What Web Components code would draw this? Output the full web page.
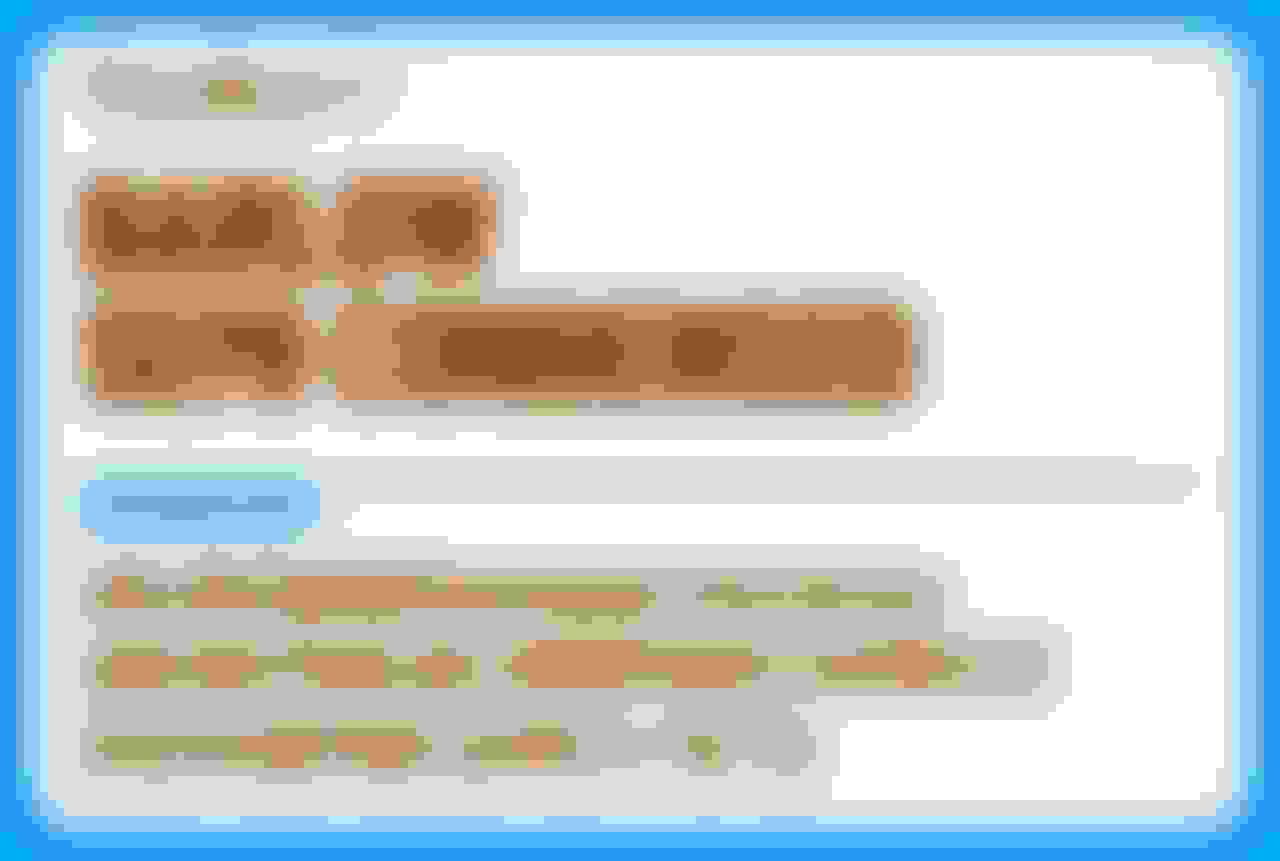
<!DOCTYPE html>
<html lang="en">
<head>
<meta charset="utf-8">
<meta name="viewport" content="width=device-width, initial-scale=1">
<title>Mosaic card</title>
<style>
html,body{margin:0;background:#2697f2;font-family:"Liberation Sans",sans-serif}
</style>
</head>
<body>
<mosaic-card>
  <mosaic-art slot="corner" class="tl" art="topLeft"></mosaic-art>
  <mosaic-art slot="corner" class="tr" art="topRight"></mosaic-art>
  <mosaic-art slot="corner" class="bl" art="bottomLeft"></mosaic-art>
  <mosaic-art slot="corner" class="br" art="bottomRight"></mosaic-art>
  <mosaic-art art="label"></mosaic-art>
  <mosaic-art art="heading"></mosaic-art>
  <mosaic-art art="tag"></mosaic-art>
  <mosaic-art art="summary"></mosaic-art>
</mosaic-card>
<script>
const CELL = 8;
const COLORS = {
  deep:'#00aef3', blue:'#2697f2', sky:'#47b7ff', steel:'#74aad8', light:'#94caf8', ice:'#b2ebff',
  teal:'#46c2d8', aqua:'#66e2f8', mint:'#b2f5df', sage:'#94d6c0', white:'#ffffff',
  g1:'#dfdfdf', g2:'#bfbfbf', g3:'#9f9f9f', lime:'#bfca87', olive:'#9faa68',
  tan:'#cc9367', peach:'#edb387', brown:'#ac7348', dark:'#8c5327'
};

// Each drawing: box = [x, y, columns, rows]; columns 0 means "fill the row".
// A layer is a colour and its runs, written row:from-to or row-row:from-to (ends excluded).
const ART = {
  topLeft: { box:[0,0,60,11], layers:[
    ['blue','2:0-8 3:0-6 4:0-4 5-7:0-3 7-11:0-2'],
    ['deep','0-2:0-4 2-4:0-2'],
    ['sky','2:8-10 3:6-10 4:4-6 5:3-6 6:3-4 7-10:2-4'],
    ['teal','2-4:10-12'],
    ['steel','3:12-17,25-32,41-47 4:6-7 6:4-5 10:2-4'],
    ['light','4:7-12 5:6-16,26-31 6:5-6 7-9:4-6 9:4-5'],
    ['mint','6-8:6-8'], ['sage','6:6-7']
  ]},
  topRight: { box:[140,0,20,12], layers:[
    ['blue','2:152-160 3:154-160 4:156-160 5-7:157-160 7-11:158-160'],
    ['deep','0-2:156-160'],
    ['g1','7:144-154 8:151-154 9-12:152-154'],
    ['sky','2:150-152 3:150-154 4:154-156 5:154-157 6:156-157 7-10:156-158'],
    ['teal','2-4:148-150'],
    ['light','4:148-153 5:151-154 6:154-155 7-9:154-156 9:155-156'],
    ['steel','4:153-154 6:155-156 10:156-158'],
    ['mint','6-8:152-154'], ['sage','6:153-154']
  ]},
  bottomLeft: { box:[0,96,110,12], layers:[
    ['blue','98-100:0-2 100-102:0-3 102:0-4 103:0-5 104:0-6 105:0-9 106-108:0-10'],
    ['deep','104-106:0-2 106-108:0-4'],
    ['light','99:5-6 100-102:5-8 102:6-25,30-41,45-63,68-75,87-90,95-102'],
    ['sky','98-100:2-4 100-102:3-4 102:4-6 103:5-6'],
    ['steel','100-102:4-5 103:6-8'],
    ['ice','100:7-8'], ['teal','96-98:2-4'], ['aqua','96:3-4']
  ]},
  bottomRight: { box:[140,96,20,12], layers:[
    ['g1','96-99:152-154 99:150-154'],
    ['blue','100-102:157-160 102:156-160 103:155-160 104:154-160 105:151-160 106-108:150-160'],
    ['deep','104-106:158-160 106-108:156-160'],
    ['light','99:154-156 100-102:152-155 102:148-154'],
    ['sky','98-100:156-158 100-102:156-157 102:154-156 103:154-155'],
    ['steel','100-102:155-156 103:152-154'],
    ['ice','100:152-153'], ['teal','96-98:156-158'], ['aqua','96:156-157']
  ]},
  label: { box:[6,6,0,13], layers:[
    ['g1','7:6-56 8-12:6-51 12-14:6-50 14:6-49 15:6-48 16:6-47 17:6-41,44-45 18:6-39,43-58'],
    ['white','14:8-9 15:8-10 16:8-11 17:8-12 18:8-11'],
    ['g2','7:13-14,27-31 8:12-19,24-33 9:11-40 10-12:11-45 12:12-43 13:13-41 14:17-38'],
    ['g3','11:25-26'], ['olive','10-13:26-32'], ['lime','10:31-32 13:26-32'], ['tan','10-12:28-30']
  ]},
  heading: { box:[6,19,0,38], layers:[
    ['g1','19:6-63 20:6-64 21-24:6-65 24-27:6-66 27-34:6-65 34:6-113 35:6-115 36:6-116 37-39:6-117 39-50:6-118 50:6-117 51:6-116 52:6-115 53:6-114 54:6-111 55:6-8,21-24 56:6-8,12-39'],
    ['white','53:8-10,39-41 54:8-13,28-32,37-45,47-52,57-62'],
    ['g2','21:11-18,20-37,43-61 22:10-12,38-39,42-44,60-62 23:9-12,38-44,60-63 24-26:9-10,40-42,62-63 26-31:8-10,62-63 31-34:9-10 32-36:60-62 34:9-12,48-52 35:10-12,48-52 36:10-12,38-52,60-72,76-85,93-97,100-111 37:10-12,38-52,60-113 38:10-12,38-42 39:9-12,38-42,114-115 40-48:9-10,114-116 48-50:10-12,38-42,114-115 50:11-39,42-114 51:12-28,32-37,44-112'],
    ['g3','23:11-12,43-44,60-61 32:60-61 34:11-12,48-49 39:11-12 43-46:114-115 48:11-12 50:14-18,22-23,53-56,63-66,72-74,75-80,93-106,110-111'],
    ['tan','22-24:12-36,44-60 24-26:10-38,42-62 26-32:10-62 32-34:10-60 34:12-40,42-48,54-58 35:12-39,43-47,54-57 36-38:14-36 38:12-38,42-112 39:12-38,42-112 40-48:10-114 48-50:12-38,42-114'],
    ['lime','22:16-20,24-26,36-38 23:37-38 24:38-40 25:39-40 34:52-53,59-60 35:40-42,52-54,58-60 36:12-13,37-38,47-48,52-60 37:37-38 38:112-114 39:113-114 40:40-42 41:40-41 46-48:10-11 47:40-41 51:18-22,66-72,106-110'],
    ['olive','23:16-20,24-26,36-37 25:38-39 34:40-42,53-54,58-59 36:13-14,36-37,44-47 37:12-14,36-37,44-48,52-60 39:112-113 41:41-42 46-48:11-12 46:40-42 47:41-42 50:18-22,66-72,106-110'],
    ['peach','22:20-24,26-28,34-36,44-45,58-60 24:61-62 26:40-41 29-32:61-62 33:10-11 35:39-40,42-43,47-48,57-58 38:42-43 40:10-11,39-40 43-46:10-11 47:39-40 49:28-31,37-38,42-43,113-114'],
    ['brown','23:30-32 24:12-17,21-23,27-36,45-59 25:11-37,44-60 26:11-37,43-60 27:11-37,43-61 28-30:11-38,43-60 30:11-38,42-60 31:12-39,42-60 32:12-39,43-48,53-59 33:13-31,35-37,45-46 39:14-22,25-36,52-78,84-96,101-102,108-111 40:12-37,50-112 41:12-37,49-113 42:12-38,49-113 43-46:12-38,50-113 46:13-37,49-112 47:13-24,32-37,50-112 48:13-22,33-36,51-80,83-104,106-112'],
    ['dark','25:30-32,54-57 26:13-15,29-34,52-59 27:13-16,21-23,28-34,51-59 28:13-17,20-24,27-34,52-59 29:13-25,27-34,52-59 30:13-25,26-33,53-58 31:14-17,20-22,55-57 41:28-35,56-70,74-76,85-90 42:28-35,55-77,84-92 43:29-36,55-78,84-92 44:32-36,55-78,84-91 45:17-19,33-35,55-77,84-91 46:17-19,56-77,85-90 47:62-67']
  ]},
  tag: { box:[6,57,0,11], layers:[
    ['g1','57:6-142 58:6-149 59-61:6-150 61:6-149 62:6-148 63:6-45 64:6-44 65:6-43 66:6-44 67:6-56 57-64:152-154'],
    ['mint','58:12-38 59:12-38 62-64:8-10 67:37-38'],
    ['sage','59:13-37 66:36-38 67:36-37'], ['g2','66:11-12'],
    ['light','60-66:10-40 66-68:12-36'],
    ['ice','60:10-11,39-40 65:39-40 67:12-13'],
    ['steel','62:14-29,31-36 63:14-36 64:20-26']
  ]},
  summary: { box:[6,68,0,34], layers:[
    ['g1','68:6-115 69:6-118 70-72:6-120 72-76:6-121 76:6-123 77:6-131 78:6-133 79-87:6-134 87:6-133 88:6-132 89:6-131 90:6-106 91-97:6-105 97-100:6-104 100-102:6-999'],
    ['g2','68:26-27,33-34 69:15-17,25-29,32-36 70:13-20,23-57 71:11-115 72:11-117 73-77:10-118 77:11-118 78:12-118 79:12-121 80:11-130 81:11-131 82-85:10-131 85:10-130 86:11-129 87:11-102 88:11-79,83-99 89:11-78,83-100 90:11-79,82-101 91:10-101 92-95:10-102 95:10-80,84-92,94-101 96:11-75,86-91,97-100 97:18-21,32-39,46-51,58-61'],
    ['g3','73:13-14,18-21,22-24,80-81,88-90,92-93,104-105 74:87-88 76:35-36 81:20-21,56-57,107-108 84:94-95 91:33-34,40-42,65-66,70-71 94:13-14,20-22,23-28,40-41,42-44,52-53,58-60,70-72,87-88'],
    ['lime','72:24-25,31-35,54-80,90-92,100-104 73:100-101 74:98-99 75:12-13,21-23,81-82,88-91,94-101,105-109 76:68-69 77:36-37,40-50,68-80 78-80:70-78 80:14-20,24-32,36-48,54-56,64-66,81-94,108-111,116-118 81:24-25,31-32,64-65 82:12-13,49-52,59-60,62-64,96-102,120-122 83:59-60,62-63,96-102,121-122 84:33-34,59-60,102-103,119-120 85:12-13,21-25,31-34,38-40,49-52,57-60,64-66,78-84,92-94,102-112,116-120 90:34-40,42-52,66-70 92:12-13,53-54,58-60,89-90 94:89-90 95:14-20,28-33,38-40,44-46,51-52,60-66,68-70,88-90'],
    ['olive','72:16-18,25-26,28-31,35-36,52-54 73:16-18,24-26,28-36,52-80,90-92,101-104 74:12-14,18-24,32-34,62-66,80-82,88-98,99-114 75:13-14,18-21,23-24,32-34,62-66,80-81,91-94,101-105,109-114 76:36-38,40-50,69-80 77:37-38,46-47,72-74,77-78 80:38-39,80-81,111-112 81:14-20,25-31,36-48,54-56,65-66,80-94,108-112,116-118 82:13-14,22-24,32-38,48-49,58-59,94-96,102-104,118-120 83:12-14,22-24,32-38,48-52,58-59,63-64,94-96,102-104,118-121 84:12-14,20-26,30-33,38-40,48-54,56-59,64-66,78-84,92-94,103-112,116-119 85:13-14,20-21,25-26,30-31,48-49,52-54,56-57 91:34-40,42-52,66-70 92:13-30,40-42,52-53,60-64,70-72,86-89 93:12-30,40-42,52-54,58-64,70-72,86-90 94:14-20,28-34,38-40,44-46,50-52,60-66,68-70,88-89 95:33-34,50-51'],
    ['tan','72:14-16,26-28,36-52 73:14-16,26-28,36-52,56-58 74-76:14-18,24-32,34-62,66-80 76-78:38-40 80:67-80,112-115 81:66-80,112-116 82-84:14-22,24-32,38-48,52-58,64-94,104-118 84:14-20,26-30,40-48,54-56,66-78,84-92,112-116 85:14-20,26-30,40-48,54-56,66-78,84-92,113-116 92-94:30-40,42-52,64-70 94:34-38,46-50,66-68 95:34-38,46-50'],
    ['peach','72:56-58 80:66-67,115-116 85:112-113 95:66-68']
  ]}
};

function outline(runs) {
  let d = '';
  for (const entry of runs.split(' ')) {
    const [rows, spans] = entry.split(':');
    const [top, end] = rows.split('-').map(Number);
    const height = (end || top + 1) - top;
    for (const span of spans.split(',')) {
      const [from, to] = span.split('-').map(Number);
      d += `M${from} ${top}h${to - from}v${height}h${from - to}z`;
    }
  }
  return d;
}

class MosaicArt extends HTMLElement {
  connectedCallback() {
    if (this.shadowRoot) return;
    const { box: [x, y, columns, rows], layers } = ART[this.getAttribute('art')];
    const width = columns ? columns * CELL + 'px' : '100%';
    const paths = layers.map(([color, runs]) => `<path fill="${COLORS[color]}" d="${outline(runs)}"/>`).join('');
    this.attachShadow({ mode: 'open' }).innerHTML = `
      <style>
        :host{display:block}
        svg{display:block;width:${width};height:${rows * CELL}px;overflow:hidden}
      </style>
      <svg aria-hidden="true" shape-rendering="crispEdges"><g transform="scale(${CELL}) translate(${-x} ${-y})">${paths}</g></svg>`;
  }
}

class MosaicCard extends HTMLElement {
  constructor() {
    super();
    this.attachShadow({ mode: 'open' }).innerHTML = `
      <style>
        :host{position:relative;display:grid;grid-template-columns:48px minmax(0,1fr) 48px;grid-template-rows:48px auto 45px;overflow:hidden}
        .top,.bottom{grid-column:1 / -1}
        .top{background:linear-gradient(#2697f2 16px,#74aad8 16px 24px,#94caf8 24px 40px,#b2ebff 40px)}
        .bottom{background:linear-gradient(#b2ebff 8px,#94caf8 8px 16px,#47b7ff 16px 32px,#2697f2 32px)}
        .left{background:linear-gradient(90deg,#2697f2 16px,#74aad8 16px 24px,#94caf8 24px 40px,#b2ebff 40px)}
        .right{background:linear-gradient(270deg,#2697f2 16px,#74aad8 16px 24px,#94caf8 24px 40px,#b2ebff 40px)}
        main{display:flex;flex-direction:column;background:#fff;box-shadow:inset -8px 8px 0 #dfdfdf}
        ::slotted([slot=corner]){position:absolute;overflow:hidden}
        ::slotted(.tl){top:0;left:0}
        ::slotted(.tr){top:0;right:0}
        ::slotted(.bl){bottom:0;left:0;height:93px}
        ::slotted(.br){bottom:0;right:0;height:93px}
      </style>
      <div class="top"></div>
      <div class="left"></div>
      <main><slot></slot></main>
      <div class="right"></div>
      <div class="bottom"></div>
      <slot name="corner"></slot>`;
  }
}

customElements.define('mosaic-art', MosaicArt);
customElements.define('mosaic-card', MosaicCard);
</script>
</body>
</html>
